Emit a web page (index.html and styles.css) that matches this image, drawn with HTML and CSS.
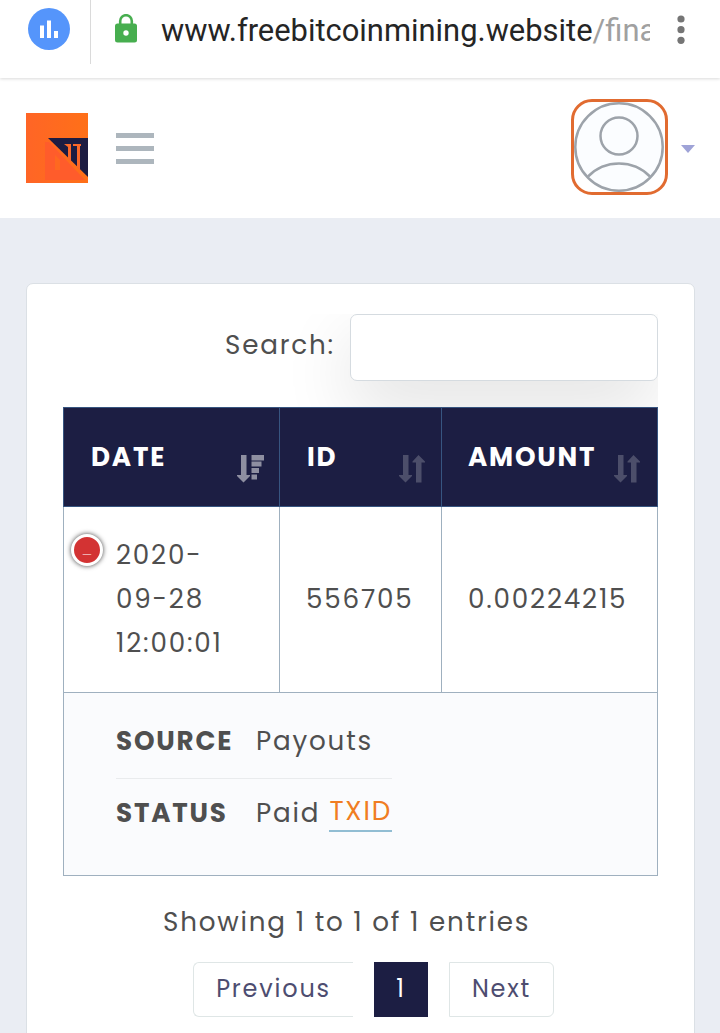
FILE: index.html
```html
<!DOCTYPE html>
<html lang="en">
<head>
  <meta charset="UTF-8" />
  <meta name="viewport" content="width=device-width, initial-scale=1.0"/>
  <title>Payouts</title>
  <link rel="stylesheet" href="styles.css">
</head>
<body>
  <!-- Address bar -->
  <div class="browser-bar">
    <div class="stats">
      <svg width="42" height="42" viewBox="0 0 42 42">
        <circle cx="21" cy="21" r="21" fill="#5595fb"/>
        <path d="M12 17.500h4v12.500h-4zM19 12.500h4v17.500h-4zM26 23h4v7h-4z" fill="#fff"/>
      </svg>
    </div>
    <svg class="lock" width="22" height="29" viewBox="0 0 22 29">
      <path d="M5.200 11V7a5.800 5.800 0 0 1 11.600 0v4" fill="none" stroke="#47ae4f" stroke-width="2.600"/>
      <rect y="9.500" width="22" height="19" rx="2.500" fill="#47ae4f"/>
      <circle cx="11" cy="19" r="2.700" fill="#fff"/>
    </svg>
    <div class="url">www.freebitcoinmining.website<span>/fina</span></div>
    <svg class="dots" width="8" height="30" viewBox="0 0 8 30">
      <g fill="#757575"><circle cx="4" cy="4" r="3.600"/><circle cx="4" cy="14.700" r="3.600"/><circle cx="4" cy="25.300" r="3.600"/></g>
    </svg>
  </div>

  <!-- Site header -->
  <header class="header">
    <svg class="logo" width="62" height="70" viewBox="0 0 62 70">
      <defs>
        <linearGradient id="orange" x1="0" y1="0" x2="1" y2="0">
          <stop offset="0" stop-color="#ff6526"/>
          <stop offset="1" stop-color="#ff7018"/>
        </linearGradient>
      </defs>
      <rect width="62" height="70" fill="url(#orange)"/>
      <path d="M19 29h4l36 38H19z" fill="#ff5c2b"/>
      <path d="M29 42l5 5v10h-5z" fill="#ff6820"/>
      <path d="M22 25h40v39z" fill="#1d1c42"/>
      <path d="M38 31h7v17.500l-3-3V34zM47 31h8v2h-1v24l-3-3V33h-4z" fill="#fb6829"/>
    </svg>
    <div class="menu-btn"><i></i><i></i><i></i></div>
    <div class="user">
      <div class="avatar">
        <svg width="90" height="90" viewBox="0 0 90 90" fill="none" stroke="#9da3aa" stroke-width="2.500">
          <circle cx="45" cy="45" r="43.700" fill="#fbfdff"/>
          <circle cx="45" cy="34" r="18.500"/>
          <path d="M14 74.500a43.500 43.500 0 0 1 62 0"/>
        </svg>
      </div>
      <div class="caret"></div>
    </div>
  </header>

  <main class="card">
    <label class="search">
      <span>Search:</span>
      <input type="text" />
    </label>

    <table class="table">
      <thead>
        <tr>
          <th class="col-date"><div class="head"><span>DATE</span>
            <svg class="sorted" width="28" height="28" viewBox="0 0 28 28">
              <path d="M4 0h5.500v20H13v1l-6.500 6.500L0 21v-1h4z"/>
              <path d="M14.500 0H27v5.500H14.500zM14.500 6.500H24.500v5H14.500zM14.500 13H22v5H14.500zM14.500 19.500H20v5H14.500z"/>
            </svg></div></th>
          <th class="col-id"><div class="head"><span>ID</span>
            <svg width="28" height="28" viewBox="0 0 28 28">
              <path d="M4 0h5.500v20H13v1l-6.500 6.500L0 21v-1h4z"/>
              <path d="M17 27.500h5.500v-20H26v-1L19.500 0 13.500 6.500v1H17z"/>
            </svg></div></th>
          <th class="col-amount"><div class="head"><span>AMOUNT</span>
            <svg width="28" height="28" viewBox="0 0 28 28">
              <path d="M4 0h5.500v20H13v1l-6.500 6.500L0 21v-1h4z"/>
              <path d="M17 27.500h5.500v-20H26v-1L19.500 0 13.500 6.500v1H17z"/>
            </svg></div></th>
        </tr>
      </thead>
      <tbody>
        <tr>
          <td class="date"><b class="toggle">_</b>2020-<br>09-28<br>12:00:01</td>
          <td>556705</td>
          <td>0.00224215</td>
        </tr>
        <tr class="child">
          <td colspan="3">
            <ul>
              <li><strong>SOURCE</strong><span>Payouts</span></li>
              <li><strong>STATUS</strong><span>Paid</span><a href="#">TXID</a></li>
            </ul>
          </td>
        </tr>
      </tbody>
    </table>

    <p class="info">Showing 1 to 1 of 1 entries</p>
    <div class="pages">
      <a class="prev" href="#">Previous</a>
      <a class="current" href="#">1</a>
      <a class="next" href="#">Next</a>
    </div>
  </main>
</body>
</html>
```
FILE: styles.css
```css
* {
  box-sizing: border-box;
}

body {
  margin: 0;
  height: 1033px;
  overflow: hidden;
  background: #eaedf3;
  color: #4f4f4f;
  font-family: Poppins, Inter, sans-serif;
  font-size: 26.2px;
  line-height: 44px;
  letter-spacing: 1.8px;
}

svg {
  display: block;
  flex: none;
}

a {
  text-decoration: none;
}

.browser-bar {
  display: flex;
  align-items: flex-start;
  height: 78px;
  background: #fff;
  position: relative;
  box-shadow: 0 1px 3px rgba(0,0,0,0.15);
}

.stats {
  width: 91px;
  height: 64px;
  padding: 8px 0 0 28px;
  border-right: 1px solid #dadada;
}

.lock {
  margin: 14px 0 0 24px;
}

.url {
  width: 489px;
  margin: 9px 0 0 24px;
  overflow: hidden;
  white-space: nowrap;
  font-family: Roboto, sans-serif;
  font-size: 30.9px;
  letter-spacing: 0;
  color: #252525;
}

.url span {
  color: #a0a0a0;
}

.dots {
  margin: 15px 0 0 27px;
}

.header {
  display: flex;
  align-items: center;
  height: 140px;
  padding: 0 25px 0 26px;
  background: #fff;
}

.menu-btn {
  display: flex;
  flex-direction: column;
  gap: 8px;
  width: 38px;
  margin: 1px 0 0 28px;
}

.menu-btn i {
  height: 5px;
  background: #adb6bd;
}

.user {
  display: flex;
  align-items: center;
  margin: 0 0 2px auto;
}

.avatar {
  width: 97px;
  height: 96px;
  border: 3px solid #e16b30;
  border-radius: 21px;
}

.caret {
  margin: 4px 0 0 13px;
  border: 7px solid transparent;
  border-top: 8px solid #9fa3d7;
  border-bottom: 0;
}

.card {
  width: 669px;
  height: 780px;
  margin: 65px 0 0 26px;
  padding: 30px 36px 0;
  background: #fff;
  border: 1px solid #dbe0e5;
  border-radius: 7px;
}

.search {
  display: flex;
  justify-content: flex-end;
  height: 93px;
  overflow: hidden;
}

.search span {
  margin-top: 9px;
}

.search input {
  width: 308px;
  height: 67px;
  margin-left: 15px;
  background: #fff;
  border: 1px solid #d5dbe0;
  border-radius: 7px;
  box-shadow: 0 26px 70px rgba(0,0,0,0.12);
}

.table {
  width: 595px;
  table-layout: fixed;
  border-collapse: collapse;
  position: relative;
}

.col-date,
.col-amount {
  width: 216px;
}

.col-id {
  width: 162px;
}

th,
td {
  border: 1px solid #9fb0bf;
  padding: 25px 26px 27px;
  text-align: left;
}

th {
  height: 99px;
  padding: 0 14px 0 27px;
  background: #1c1e43;
  border-color: #375580;
  color: #fff;
  font-weight: 700;
}

th.col-amount {
  padding: 0 15px 0 26px;
}

.head {
  display: flex;
  justify-content: space-between;
}

.head svg {
  fill: #4c4e6a;
  margin: 20px 0 -4px;
}

.head svg.sorted {
  fill: #8e8fa1;
}

td {
  height: 186px;
}

td.date {
  position: relative;
  padding-left: 52px;
  white-space: nowrap;
}

/* round expand/collapse marker sitting on the cell edge */
.toggle {
  position: absolute;
  top: 27px;
  left: 7px;
  width: 32px;
  height: 32px;
  border: 3px solid #fff;
  border-radius: 50%;
  background: #d33333;
  box-shadow: 0 0 5px #444;
  color: #fff;
  font: 14px/24px "Liberation Mono", monospace;
  letter-spacing: 0;
  text-align: center;
}

.child td {
  height: 183px;
  padding: 26px 52px 24px;
  background: #fafbfd;
  vertical-align: top;
}

.child ul {
  display: block;
  width: 276px;
  margin: 0;
  padding: 0;
  list-style: none;
}

.child li {
  display: flex;
  padding: 12px 0;
  white-space: nowrap;
}

.child li:first-child {
  padding: 0 0 15px;
  border-bottom: 1px solid #e9ebed;
}

.child strong {
  width: 140px;
  font-weight: 700;
}

.child a {
  height: 41px;
  margin-left: auto;
  line-height: 40px;
  color: #f07d22;
  border-bottom: 2px solid #91bdd3;
}

.info {
  margin: 24px 0 18px;
  padding-left: 100px;
  white-space: nowrap;
}

.pages {
  display: flex;
  gap: 21px;
  padding-left: 130px;
}

.pages a {
  height: 55px;
  border: 1px solid #dfe6e6;
  color: #4d4d70;
  font-size: 24px;
  line-height: 52px;
  text-align: center;
}

.pages .prev {
  width: 160px;
  border-right: 0;
  border-radius: 6px 0 0 6px;
}

.pages .current {
  width: 54px;
  background: #1c1e43;
  border-color: #1c1e43;
  color: #fff;
}

.pages .next {
  width: 105px;
  border-radius: 0 6px 6px 0;
}
```
